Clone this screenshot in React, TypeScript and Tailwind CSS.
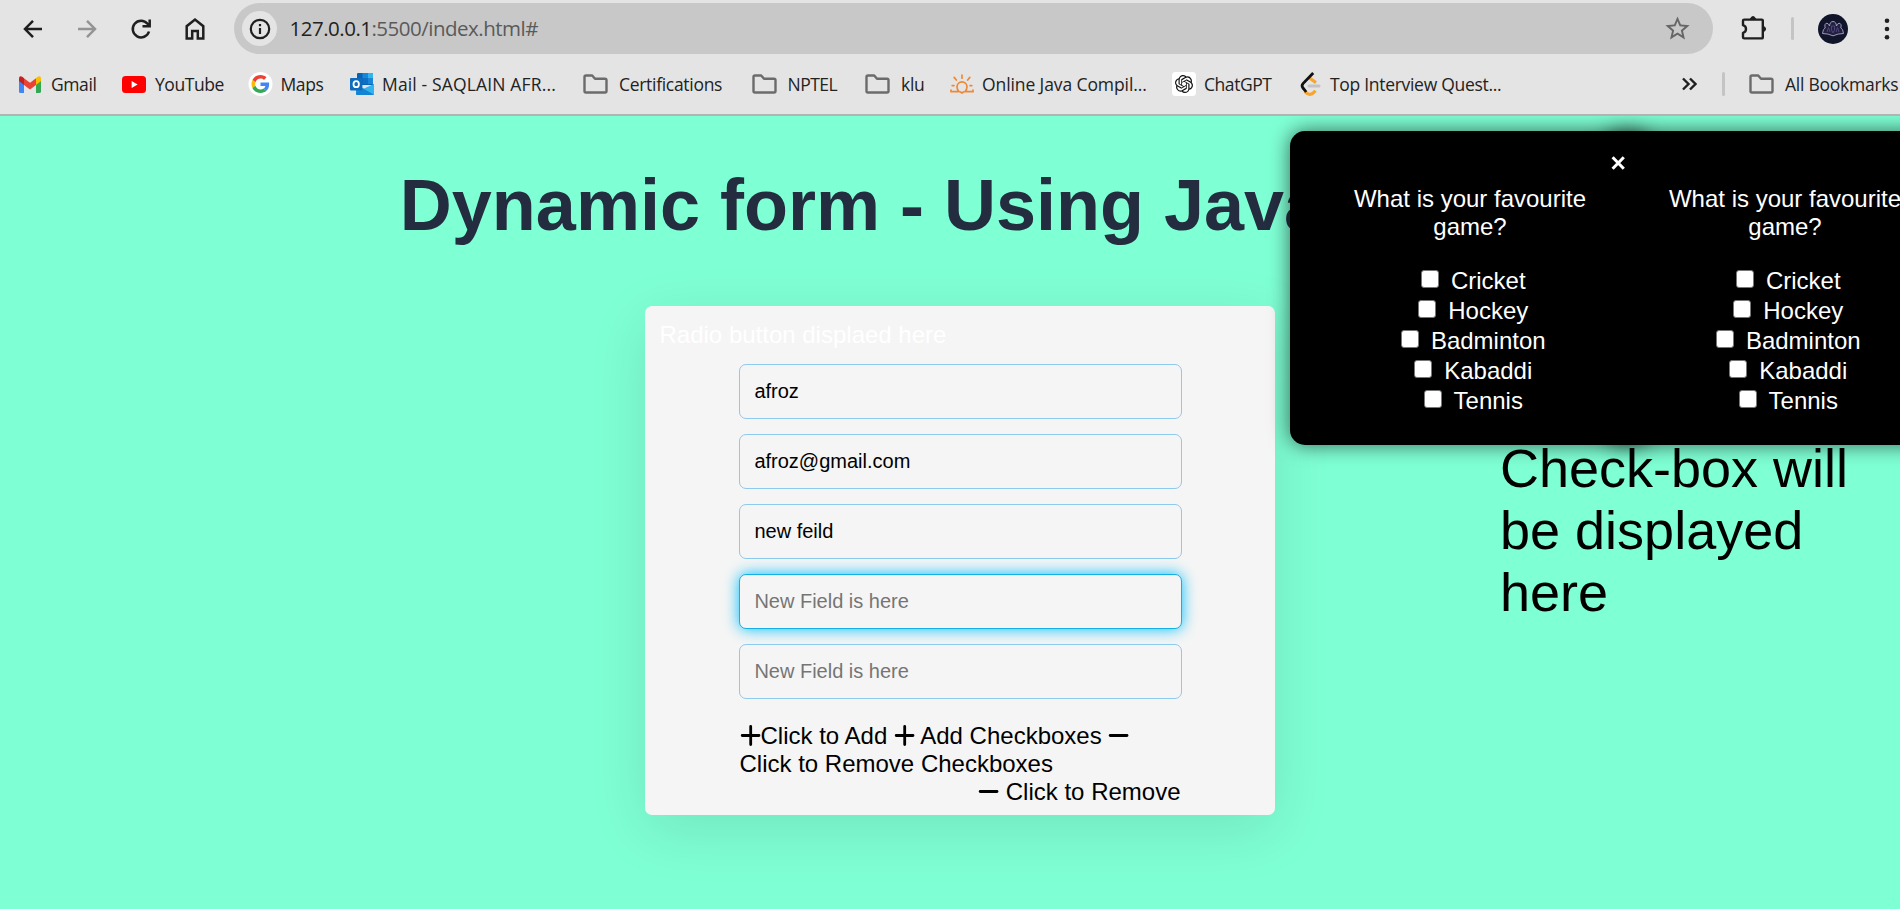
import React from "react";

const Folder = () => (
  <svg width="25" height="20" viewBox="0 0 25 20" fill="none" stroke="#6b6b6b" strokeWidth="2.4" strokeLinejoin="round" className="shrink-0">
    <path d="M1.5 17V3Q1.5 1.5 3 1.5H9.2L12 4.8H22Q23.5 4.8 23.5 6.3V17Q23.5 18.5 22 18.5H3Q1.5 18.5 1.5 17Z" />
  </svg>
);

const Gmail = () => (
  <svg width="22" height="17" viewBox="0 0 22 17" className="shrink-0">
    <path d="M0 3V15.4Q0 17 1.6 17H5V7Z" fill="#4285f4" />
    <path d="M22 3V15.4Q22 17 20.4 17H17V7Z" fill="#34a853" />
    <path d="M0 2.6V5L5 9V2.2L3.4 .8Q0-.8 0 2.6Z" fill="#c5221f" />
    <path d="M22 2.6V5L17 9V2.2L18.6 .8Q22-.8 22 2.6Z" fill="#fbbc04" />
    <path d="M5 2.2L11 6.8L17 2.2V9L11 13.6L5 9Z" fill="#ea4335" />
  </svg>
);

const YouTube = () => (
  <svg width="24" height="17" viewBox="0 0 24 17" className="shrink-0">
    <rect width="24" height="17" rx="3.5" fill="#f00" />
    <path d="M9.6 5.1L15.6 8.5L9.6 11.9Z" fill="#fff" />
  </svg>
);

const Google = () => (
  <svg width="25" height="24" viewBox="0 0 24 24" className="shrink-0">
    <circle cx="12" cy="12" r="12" fill="#fff" />
    <g transform="translate(3 3) scale(.375)">
      <path fill="#EA4335" d="M24 9.5c3.54 0 6.71 1.22 9.21 3.6l6.85-6.85C35.9 2.38 30.47 0 24 0 14.62 0 6.51 5.38 2.56 13.22l7.98 6.19C12.43 13.72 17.74 9.5 24 9.5z" />
      <path fill="#4285F4" d="M46.98 24.55c0-1.57-.15-3.09-.38-4.55H24v9.02h12.94c-.58 2.96-2.26 5.48-4.78 7.18l7.73 6c4.51-4.18 7.09-10.36 7.09-17.65z" />
      <path fill="#FBBC05" d="M10.53 28.59c-.48-1.45-.76-2.99-.76-4.59s.27-3.14.76-4.59l-7.98-6.19C.92 16.46 0 20.12 0 24c0 3.88.92 7.54 2.56 10.78l7.97-6.19z" />
      <path fill="#34A853" d="M24 48c6.48 0 11.93-2.13 15.89-5.81l-7.73-6c-2.15 1.45-4.92 2.3-8.16 2.3-6.26 0-11.57-4.22-13.47-9.91l-7.98 6.19C6.51 42.62 14.62 48 24 48z" />
    </g>
  </svg>
);

const Outlook = () => (
  <svg width="24" height="22" viewBox="0 0 24 22" className="shrink-0">
    <path d="M7 1Q7 0 8 0H22Q23 0 23 1V12H7Z" fill="#0a62b5" />
    <path d="M12.5 0H18V5.5H12.5Z" fill="#1489d8" />
    <path d="M18 0H22Q23 0 23 1V5.5H18Z" fill="#35b3ee" />
    <path d="M12.5 5.5H18V11H12.5Z" fill="#0c70c4" />
    <path d="M18 5.5H23V11H18Z" fill="#1a86d8" />
    <path d="M6 11L15 16.5L24 11V20.5Q24 22 22.5 22H7.5Q6 22 6 20.5Z" fill="#1490df" />
    <path d="M24 11V20.5Q24 22 22.5 22L13 16L24 11Z" fill="#2fb4ef" />
    <path d="M6 20.5Q6 22 7.5 22H22.5Q23.3 22 23.7 21.4L13 15.4Z" fill="#1383d3" />
    <rect x="0" y="5" width="12.4" height="12.4" rx="1" fill="#0f6cbd" />
    <ellipse cx="6.2" cy="11.2" rx="2.7" ry="3" fill="none" stroke="#fff" strokeWidth="1.8" />
  </svg>
);

const Sunrise = () => (
  <svg width="24" height="20" viewBox="0 0 24 20" fill="none" stroke="#ed8936" strokeWidth="1.7" strokeLinecap="round" className="shrink-0">
    <path d="M1 16V17.6H9Q7 15.8 7 12.8A5 5 0 0 1 17 12.8Q17 15.8 15 17.6H23V16M10.5 18L12 19L13.5 18M12 1V4.2M4.2 3.4L6.3 6M19.8 3.4L17.7 6M2.2 11.6H4M20 11.6H21.8" />
  </svg>
);

const ChatGPT = () => (
  <svg width="24" height="24" viewBox="0 0 24 24" className="shrink-0">
    <rect width="24" height="24" rx="3.5" fill="#fff" />
    <path transform="translate(3 3) scale(.75)" fill="#111" d="M22.2819 9.8211a5.9847 5.9847 0 0 0-.5157-4.9108 6.0462 6.0462 0 0 0-6.5098-2.9A6.0651 6.0651 0 0 0 4.9807 4.1818a5.9847 5.9847 0 0 0-3.9977 2.9 6.0462 6.0462 0 0 0 .7427 7.0966 5.98 5.98 0 0 0 .511 4.9107 6.051 6.051 0 0 0 6.5146 2.9001A5.9847 5.9847 0 0 0 13.2599 24a6.0557 6.0557 0 0 0 5.7718-4.2058 5.9894 5.9894 0 0 0 3.9977-2.9001 6.0557 6.0557 0 0 0-.7475-7.0729zm-9.022 12.6081a4.4755 4.4755 0 0 1-2.8764-1.0408l.1419-.0804 4.7783-2.7582a.7948.7948 0 0 0 .3927-.6813v-6.7369l2.02 1.1686a.071.071 0 0 1 .038.052v5.5826a4.504 4.504 0 0 1-4.4945 4.4944zm-9.6607-4.1254a4.4708 4.4708 0 0 1-.5346-3.0137l.142.0852 4.783 2.7582a.7712.7712 0 0 0 .7806 0l5.8428-3.3685v2.3324a.0804.0804 0 0 1-.0332.0615L9.74 19.9502a4.4992 4.4992 0 0 1-6.1408-1.6464zM2.3408 7.8956a4.485 4.485 0 0 1 2.3655-1.9728V11.6a.7664.7664 0 0 0 .3879.6765l5.8144 3.3543-2.0201 1.1685a.0757.0757 0 0 1-.071 0l-4.8303-2.7865A4.504 4.504 0 0 1 2.3408 7.872zm16.5963 3.8558L13.1038 8.364 15.1192 7.2a.0757.0757 0 0 1 .071 0l4.8303 2.7913a4.4944 4.4944 0 0 1-.6765 8.1042v-5.6772a.79.79 0 0 0-.407-.667zm2.0107-3.0231l-.142-.0852-4.7735-2.7818a.7759.7759 0 0 0-.7854 0L9.409 9.2297V6.8974a.0662.0662 0 0 1 .0284-.0615l4.8303-2.7866a4.4992 4.4992 0 0 1 6.6802 4.66zM8.3065 12.863l-2.02-1.1638a.0804.0804 0 0 1-.038-.0567V6.0742a4.4992 4.4992 0 0 1 7.3757-3.4537l-.142.0805L8.704 5.459a.7948.7948 0 0 0-.3927.6813zm1.0976-2.3654l2.602-1.4998 2.6069 1.4998v2.9994l-2.5974 1.4997-2.6067-1.4997Z" />
  </svg>
);

const LeetCode = () => (
  <svg width="21" height="24" viewBox="0 0 21 24" fill="none" className="shrink-0">
    <path d="M9.5 6L16 10.6M5 19.6Q10 25.5 15.5 18.8" stroke="#f7a531" strokeWidth="3.2" />
    <path d="M13.2 1L3 11.6Q1.2 13.8 3 16L6.2 20" stroke="#111" strokeWidth="2.8" />
    <path d="M9 14H19" stroke="#c6c2c2" strokeWidth="3" strokeLinecap="round" />
  </svg>
);

const Plus = () => (
  <svg width="21" height="21" viewBox="0 0 21 21" stroke="#000" strokeWidth="2.8" strokeLinecap="round" className="inline-block align-[-2px]">
    <path d="M10.7 1.5V19.5M2.2 10.5H19" />
  </svg>
);
const Minus = () => (
  <svg width="21" height="21" viewBox="0 0 21 21" stroke="#000" strokeWidth="2.8" strokeLinecap="round" className="inline-block align-[-2px]">
    <path d="M2.2 10.5H19" />
  </svg>
);

const bookmarks = [
  { icon: <Gmail />, label: "Gmail", place: "w-[103px] gap-[10px]", text: "tracking-[-0.4px]" },
  { icon: <YouTube />, label: "YouTube", place: "w-[125.5px] gap-[9px]", text: "tracking-[-0.45px]" },
  { icon: <Google />, label: "Maps", place: "w-[102.5px] gap-[8px]", text: "tracking-[-0.4px]" },
  { icon: <Outlook />, label: "Mail - SAQLAIN AFR...", place: "w-[233px] gap-[8px]", text: "tracking-[0.15px]" },
  { icon: <Folder />, label: "Certifications", place: "w-[168.5px] gap-[11px]", text: "tracking-[-0.3px]" },
  { icon: <Folder />, label: "NPTEL", place: "w-[113.5px] gap-[11px]", text: "tracking-[-0.5px]" },
  { icon: <Folder />, label: "klu", place: "w-[85px] gap-[11px]", text: "tracking-[-0.3px]" },
  { icon: <Sunrise />, label: "Online Java Compil...", place: "w-[222px] gap-[8px]", text: "tracking-[-0.1px]" },
  { icon: <ChatGPT />, label: "ChatGPT", place: "w-[128px] gap-[8px]", text: "tracking-[-0.45px]" },
  { icon: <LeetCode />, label: "Top Interview Quest...", place: "w-[382px] gap-[9px]", text: "tracking-[-0.3px]" },
];

const fields = [
  { value: "afroz", focused: false },
  { value: "afroz@gmail.com", focused: false },
  { value: "new feild", focused: false },
  { value: "", focused: true },
  { value: "", focused: false },
];

const games = ["Cricket", "Hockey", "Badminton", "Kabaddi", "Tennis"];

const Survey = ({ place, close }: { place: string; close?: boolean }) => (
  <div className={`absolute top-[15px] h-[314px] w-[360px] rounded-[15px] bg-black text-center text-[24px] text-white shadow-[0_0_20px_rgba(0,0,0,0.6)] ${place}`}>
    {close && (
      <svg width="15" height="14" viewBox="0 0 15 14" stroke="#fff" strokeWidth="3" className="absolute top-[25px] left-[6px]">
        <path d="M1.6 1.2L12.8 12.8M12.8 1.2L1.6 12.8" />
      </svg>
    )}
    <p className="mx-auto mt-[54px] w-[260px] leading-[28px]">What is your favourite game?</p>
    <div className="mt-[25px] flex flex-col">
      {games.map((game) => (
        <label key={game} className="flex h-[30px] items-center justify-center pl-[6.5px] leading-[28px]">
          <input type="checkbox" className="mr-[12px] mb-[4px] size-[18px] shrink-0 appearance-none rounded-[3px] border border-[#767676] bg-white" />
          {game}
        </label>
      ))}
    </div>
  </div>
);

export default function App() {
  return (
    <div className="flex h-[909px] w-[1900px] flex-col overflow-hidden bg-[#7fffd4] font-['Liberation_Sans',Arial,sans-serif]">
      <header className="flex h-[116px] shrink-0 flex-col border-b-2 border-[#b0b4b2] bg-[#e4e4e4] font-['Open_Sans',sans-serif] text-[#222]">
        <div className="mt-[3px] flex h-[51px] shrink-0 items-center">
          <nav className="flex w-[234px] shrink-0 items-center pl-[20px]">
            <svg width="26" height="26" viewBox="0 0 26 26" fill="none" stroke="#1f1f1f" strokeWidth="2.5" className="mr-[28px]">
              <path d="M22 13H5.5M13 4.8L5 13L13 21.2" />
            </svg>
            <svg width="26" height="26" viewBox="0 0 26 26" fill="none" stroke="#949494" strokeWidth="2.5" className="mr-[28px]">
              <path d="M4 13H20.5M13 4.8L21 13L13 21.2" />
            </svg>
            <svg width="26" height="26" viewBox="0 0 26 26" fill="none" stroke="#1f1f1f" strokeWidth="2.5" className="mr-[28px]">
              <path d="M21 15.5A8.3 8.3 0 1 1 19.5 7.8L21.5 10M14.5 10.2H21.7V3.5" />
            </svg>
            <svg width="26" height="26" viewBox="0 0 26 26" fill="none" stroke="#1f1f1f" strokeWidth="2.5">
              <path d="M4.7 22.4V10.2L13 3.6L21.3 10.2V22.4H15.8V15H10.2V22.4Z" />
            </svg>
          </nav>
          <div className="flex h-[51px] w-[1479px] shrink-0 items-center rounded-full bg-[#c8c8c8]">
            <div className="ml-[8px] flex size-[35px] items-center justify-center rounded-full bg-[#e4e4e4]">
              <svg width="22" height="22" viewBox="0 0 22 22" fill="none" stroke="#1f1f1f" strokeWidth="2.2">
                <circle cx="11" cy="11" r="9.2" />
                <path d="M11 10V16M11 6V8.3" />
              </svg>
            </div>
            <span className="ml-[12.5px] text-[20.5px] tracking-[-0.5px] text-[#5a5a5a]">
              <span className="text-[#222]">127.0.0.1</span>:5500/index.html#
            </span>
            <svg width="29" height="29" viewBox="0 0 24 24" fill="#666" className="mr-[21.5px] mb-[1px] ml-auto">
              <path d="M22 9.24l-7.19-.62L12 2 9.19 8.63 2 9.24l5.46 4.73L5.82 21 12 17.27 18.18 21l-1.63-7.03L22 9.24zM12 15.4l-3.76 2.27 1-4.28-3.32-2.88 4.38-.38L12 6.1l1.71 4.04 4.38.38-3.32 2.88 1 4.28L12 15.4z" />
            </svg>
          </div>
          <svg width="26" height="26" viewBox="0 0 26 26" fill="none" stroke="#1f1f1f" strokeWidth="2.4" strokeLinejoin="round" className="mb-[2px] ml-[28px] shrink-0">
            <path d="M3.2 4.6H20.8Q21.8 4.6 21.8 5.6V22.4Q21.8 23.4 20.8 23.4H3.2Q2 23.4 2 22.2V17.8Q5 17 5 14Q5 11 2 10.2V5.8Q2 4.6 3.2 4.6Z" />
            <path d="M9.5 4Q10 1.6 12 1.6T14.5 4ZM22 11.3Q24.6 11.8 24.6 14T22 16.7Z" fill="#1f1f1f" strokeWidth="1" />
          </svg>
          <div className="ml-[24px] h-[23px] w-[3px] shrink-0 rounded bg-[#c4c4c4]" />
          <svg width="30" height="30" viewBox="0 0 30 30" fill="none" className="ml-[24px] shrink-0">
            <circle cx="15" cy="15" r="15" fill="#11152b" />
            <path d="M4.5 19.5Q5 14.5 7.2 14Q6 9.5 9 9.200Q11 10 11.500 12Q12 7.500 15 7.500Q18 7.500 18.500 12Q19 10 21 9.200Q24 9.500 22.800 14Q25 14.500 25.500 19.500Q20 19.500 15 21.800Q10 19.500 4.500 19.500Z" fill="#221f40" stroke="#aaa6c4" strokeWidth="0.9" />
            <path d="M9 18L10.500 13.500L12 18M18 18L19.500 13.500L21 18M13.500 12H16.500V16L15 19L13.500 16Z" stroke="#4b4578" />
          </svg>
          <svg width="6" height="22" viewBox="0 0 6 22" fill="#1f1f1f" className="ml-[36px] shrink-0">
            <circle cx="3" cy="2.800" r="2.300" />
            <circle cx="3" cy="11" r="2.300" />
            <circle cx="3" cy="19.200" r="2.300" />
          </svg>
        </div>
        <div className="mt-[12px] flex h-[36px] shrink-0 items-center pl-[19px] text-[17.5px] whitespace-nowrap">
          {bookmarks.map((b) => (
            <div key={b.label} className={`flex shrink-0 items-center ${b.place}`}>
              {b.icon}
              <span className={b.text}>{b.label}</span>
            </div>
          ))}
          <svg width="15" height="14" viewBox="0 0 15 14" fill="none" stroke="#1f1f1f" strokeWidth="2.4" className="shrink-0">
            <path d="M1 1.5L6.5 7L1 12.5M8 1.5L13.5 7L8 12.5" />
          </svg>
          <div className="ml-[25px] h-[24px] w-[3px] shrink-0 rounded bg-[#c4c4c4]" />
          <div className="ml-[24px] flex shrink-0 items-center gap-[11px]">
            <Folder />
            <span className="tracking-[-0.25px]">All Bookmarks</span>
          </div>
        </div>
      </header>

      <main className="relative flex w-[1920px] grow flex-col overflow-hidden">
        <h1 className="mt-[48px] text-center text-[72px] leading-[82px] font-bold text-[#232d3f]">Dynamic form - Using Javascript</h1>
        <div className="mt-[60px] flex">
          <section className="ml-[645px] flex h-[509px] w-[630px] shrink-0 flex-col rounded-[7px] bg-[#f5f5f5] shadow-[0_15px_60px_rgba(0,0,0,0.1)]">
            <p className="mt-[15px] ml-[14.5px] text-[24px] leading-[28px] text-white">Radio button displaed here</p>
            <form className="mt-[15px] ml-[94px] flex w-[443px] flex-col">
              {fields.map((f, i) => (
                <input
                  key={i}
                  defaultValue={f.value}
                  placeholder="New Field is here"
                  className={
                    f.focused
                      ? "mb-[15px] h-[55px] rounded-[7px] border border-[#12b0e4] bg-[#f5f5f5] px-[14.4px] text-[20px] text-black shadow-[0_0_15px_#00bfff] outline-none placeholder:text-[#757575]"
                      : "mb-[15px] h-[55px] rounded-[7px] border border-[#8ec9ee] px-[14.4px] text-[20px] text-black outline-none placeholder:text-[#757575]"
                  }
                />
              ))}
              <div className="mt-[8px] pr-[1.5px] pl-[0.5px] text-[24px] leading-[28px] whitespace-nowrap text-black">
                <p><Plus />Click to Add <Plus /> Add Checkboxes <Minus /></p>
                <p>Click to Remove Checkboxes</p>
                <p className="text-right"><Minus /> Click to Remove</p>
              </div>
            </form>
          </section>
          <p className="mt-[131px] ml-[225px] w-[360px] text-[54px] leading-[62px] text-black">Check-box will be displayed here</p>
        </div>
        <Survey place="left-[1290px]" />
        <Survey place="left-[1605px]" close />
      </main>
    </div>
  );
}
